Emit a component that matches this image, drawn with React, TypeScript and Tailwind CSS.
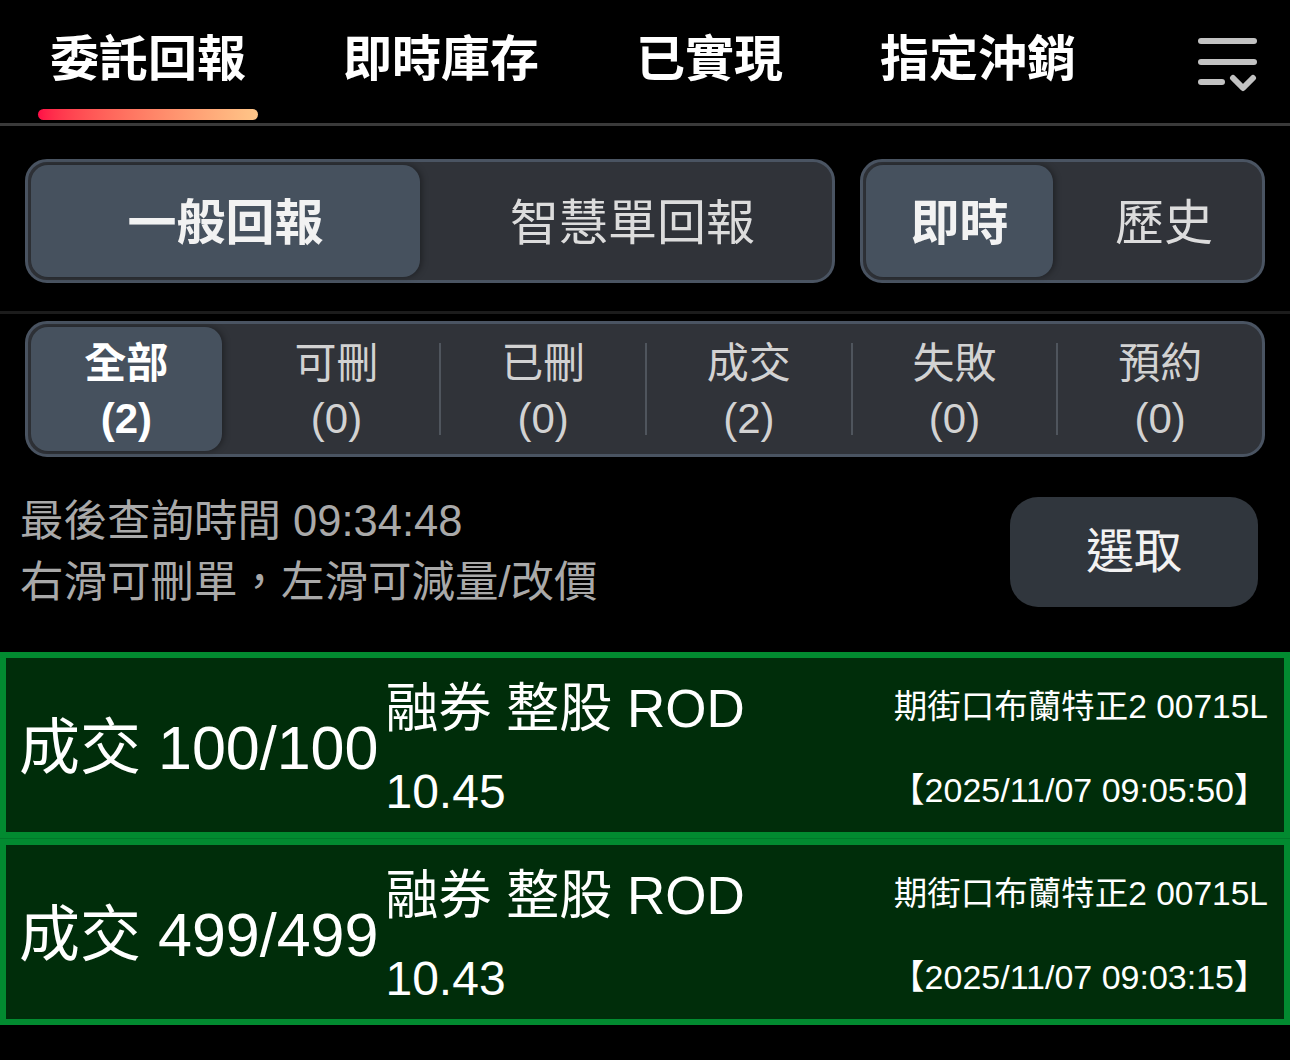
const TABS = ["委託回報", "即時庫存", "已實現", "指定沖銷"];

const FILTERS = [
  { label: "全部", count: 2 },
  { label: "可刪", count: 0 },
  { label: "已刪", count: 0 },
  { label: "成交", count: 2 },
  { label: "失敗", count: 0 },
  { label: "預約", count: 0 },
];

const ORDERS = [
  { fill: "100/100", price: "10.45", time: "2025/11/07 09:05:50" },
  { fill: "499/499", price: "10.43", time: "2025/11/07 09:03:15" },
];

function SortIcon() {
  return (
    <svg width="66" height="60" viewBox="0 0 66 60" fill="none" stroke="#c2c2c2" strokeWidth="6" strokeLinecap="round" strokeLinejoin="round">
      <path d="M7 9H60" />
      <path d="M7 30H60" />
      <path d="M7 50H28" />
      <path d="M39 46L49 56L59 46" />
    </svg>
  );
}

function Header() {
  return (
    <div className="flex h-[126px] border-b-[3px] border-[#3a3a3a] pl-[38px] pr-[30px]">
      <div className="flex gap-[73px]">
        {TABS.map((tab, i) => (
          <div key={tab} className="flex flex-col px-3">
            <span className="mt-[35px] text-[49px] font-bold leading-[49px] text-white">{tab}</span>
            {i === 0 && (
              <div className="mx-[-12px] mt-[25px] h-[11px] rounded-full bg-gradient-to-r from-[#ff0a47] to-[#ffc688]" />
            )}
          </div>
        ))}
      </div>
      <div className="ml-auto mt-[32px]">
        <SortIcon />
      </div>
    </div>
  );
}

function Segment({ options, firstWidth }: { options: string[]; firstWidth: string }) {
  return (
    <div className="flex h-[124px] rounded-[22px] border-[3px] border-[#4a5462] bg-[#303339] p-[3px]">
      <div
        className={`${firstWidth} flex items-center justify-center rounded-[17px] bg-[#46515e] pt-[6px] text-[49px] font-bold text-[#f2f2f2] shadow-[2px_0_6px_rgba(0,0,0,0.35)]`}
      >
        {options[0]}
      </div>
      <div className="flex flex-1 items-center justify-center pl-[16px] pt-[6px] text-[49px] text-[#dcdcdc]">
        {options[1]}
      </div>
    </div>
  );
}

function FilterBar() {
  return (
    <div className="mx-[25px] mt-[7px] grid h-[136px] grid-cols-6 rounded-[22px] border-[3px] border-[#4a5462] bg-[#303339] py-[3px]">
      {FILTERS.map((f, i) => {
        const active = i === 0;
        return (
          <div key={f.label} className="flex items-center">
            {i >= 2 && <div className="h-[92px] w-[2px] bg-[#4f555d]" />}
            <div
              className={
                active
                  ? "ml-[3px] mr-[12px] flex h-full flex-1 flex-col items-center justify-center rounded-[17px] bg-[#46515e] pt-[4px] font-bold text-white shadow-[2px_0_6px_rgba(0,0,0,0.35)]"
                  : "flex h-full flex-1 flex-col items-center justify-center pt-[4px] text-[#d2d2d2]"
              }
            >
              <span className="text-[42px] leading-[55px]">{f.label}</span>
              <span className="text-[42px] leading-[55px]">({f.count})</span>
            </div>
          </div>
        );
      })}
    </div>
  );
}

function OrderCard({ fill, price, time }: { fill: string; price: string; time: string }) {
  return (
    <div className="flex h-[186px] border-[6px] border-[#028a30] bg-[#002d0a] text-white">
      <div className="flex items-center pl-[13px] pt-[6px] text-[61px] leading-none whitespace-nowrap">
        成交 {fill}
      </div>
      <div className="ml-[7px] flex flex-1 flex-col justify-between pb-[16px] pt-[24px]">
        <span className="text-[53px] leading-[53px] whitespace-nowrap">融券 整股 ROD</span>
        <span className="text-[48px] leading-[48px]">{price}</span>
      </div>
      <div className="flex flex-col items-end justify-between pb-[25px] pr-[16px] pt-[32px] leading-[34px] whitespace-nowrap">
        <span className="text-[33.5px]">期街口布蘭特正2 00715L</span>
        <span className="text-[34px]">【{time}】</span>
      </div>
    </div>
  );
}

export default function App() {
  return (
    <div className="h-[1060px] w-[1290px] overflow-hidden bg-black font-[family-name:'Liberation_Sans','Noto_Sans_CJK_TC',sans-serif]">
      <Header />

      <div className="flex gap-[25px] border-b-[3px] border-[#1c1c1c] px-[25px] pb-[28px] pt-[33px]">
        <div className="w-[810px]">
          <Segment options={["一般回報", "智慧單回報"]} firstWidth="w-[389px]" />
        </div>
        <div className="flex-1">
          <Segment options={["即時", "歷史"]} firstWidth="w-[187px]" />
        </div>
      </div>

      <FilterBar />

      <div className="flex h-[195px] items-center pb-[5px] pl-[20px] pr-[32px]">
        <div className="flex flex-col text-[43.5px] leading-[61px] text-[#a9a9a9]">
          <span>最後查詢時間 09:34:48</span>
          <span>右滑可刪單，左滑可減量/改價</span>
        </div>
        <button
          type="button"
          className="ml-auto flex h-[110px] w-[248px] items-center justify-center rounded-[28px] bg-[#30363d] text-[48px] text-[#f2f2f2]"
        >
          選取
        </button>
      </div>

      <div className="flex flex-col gap-px bg-[#01782a]">
        {ORDERS.map((o) => (
          <OrderCard key={o.time} {...o} />
        ))}
      </div>
    </div>
  );
}
